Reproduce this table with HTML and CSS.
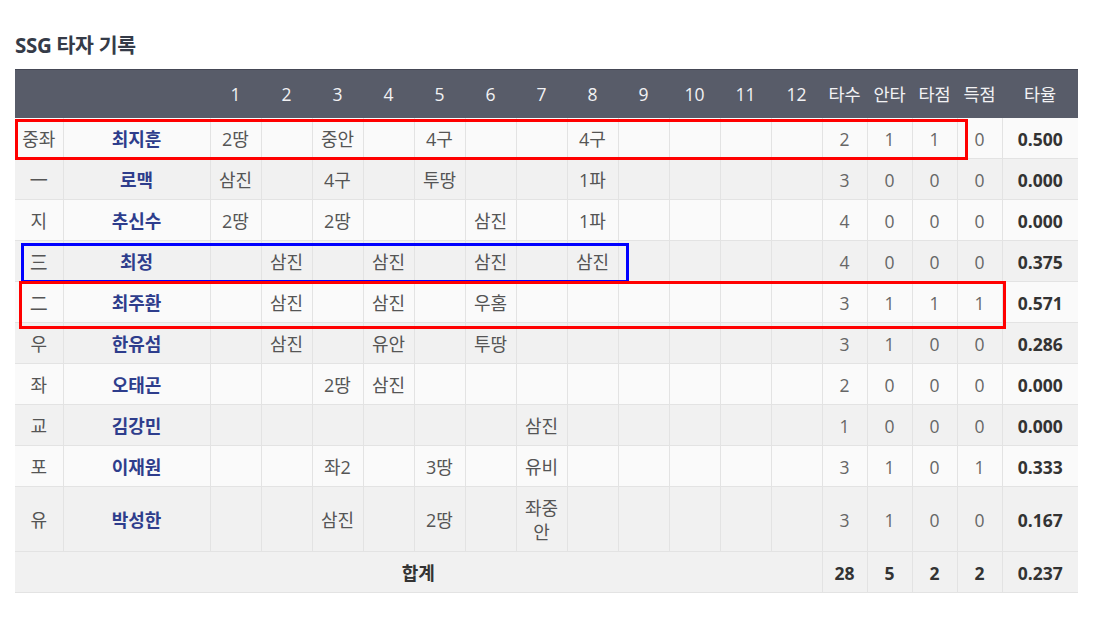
FILE: index.html
```html
<!DOCTYPE html>
<html lang="ko">
<head>
<meta charset="utf-8">
<link rel="stylesheet" href="styles.css">
</head>
<body>
<div class="page">
  <h2 class="title">SSG 타자 기록</h2>
  <div class="board">
    <table class="box">
      <colgroup>
        <col class="c-pos"><col class="c-name">
        <col class="c-inn"><col class="c-inn"><col class="c-inn"><col class="c-inn"><col class="c-inn"><col class="c-inn">
        <col class="c-inn"><col class="c-inn"><col class="c-inn"><col class="c-inn"><col class="c-inn"><col class="c-inn">
        <col class="c-stat"><col class="c-stat"><col class="c-stat"><col class="c-stat"><col class="c-avg">
      </colgroup>
      <thead>
        <tr>
          <th></th><th></th>
          <th>1</th><th>2</th><th>3</th><th>4</th><th>5</th><th>6</th><th>7</th><th>8</th><th>9</th><th>10</th><th>11</th><th>12</th>
          <th>타수</th><th>안타</th><th>타점</th><th>득점</th><th>타율</th>
        </tr>
      </thead>
      <tbody>
        <tr><td>중좌</td><td class="name">최지훈</td><td>2땅</td><td></td><td>중안</td><td></td><td>4구</td><td></td><td></td><td>4구</td><td></td><td></td><td></td><td></td><td class="num">2</td><td class="num">1</td><td class="num">1</td><td class="num">0</td><td class="avg">0.500</td></tr>
        <tr><td>一</td><td class="name">로맥</td><td>삼진</td><td></td><td>4구</td><td></td><td>투땅</td><td></td><td></td><td>1파</td><td></td><td></td><td></td><td></td><td class="num">3</td><td class="num">0</td><td class="num">0</td><td class="num">0</td><td class="avg">0.000</td></tr>
        <tr><td>지</td><td class="name">추신수</td><td>2땅</td><td></td><td>2땅</td><td></td><td></td><td>삼진</td><td></td><td>1파</td><td></td><td></td><td></td><td></td><td class="num">4</td><td class="num">0</td><td class="num">0</td><td class="num">0</td><td class="avg">0.000</td></tr>
        <tr><td>三</td><td class="name">최정</td><td></td><td>삼진</td><td></td><td>삼진</td><td></td><td>삼진</td><td></td><td>삼진</td><td></td><td></td><td></td><td></td><td class="num">4</td><td class="num">0</td><td class="num">0</td><td class="num">0</td><td class="avg">0.375</td></tr>
        <tr><td>二</td><td class="name">최주환</td><td></td><td>삼진</td><td></td><td>삼진</td><td></td><td>우홈</td><td></td><td></td><td></td><td></td><td></td><td></td><td class="num">3</td><td class="num">1</td><td class="num">1</td><td class="num">1</td><td class="avg">0.571</td></tr>
        <tr><td>우</td><td class="name">한유섬</td><td></td><td>삼진</td><td></td><td>유안</td><td></td><td>투땅</td><td></td><td></td><td></td><td></td><td></td><td></td><td class="num">3</td><td class="num">1</td><td class="num">0</td><td class="num">0</td><td class="avg">0.286</td></tr>
        <tr><td>좌</td><td class="name">오태곤</td><td></td><td></td><td>2땅</td><td>삼진</td><td></td><td></td><td></td><td></td><td></td><td></td><td></td><td></td><td class="num">2</td><td class="num">0</td><td class="num">0</td><td class="num">0</td><td class="avg">0.000</td></tr>
        <tr><td>교</td><td class="name">김강민</td><td></td><td></td><td></td><td></td><td></td><td></td><td>삼진</td><td></td><td></td><td></td><td></td><td></td><td class="num">1</td><td class="num">0</td><td class="num">0</td><td class="num">0</td><td class="avg">0.000</td></tr>
        <tr><td>포</td><td class="name">이재원</td><td></td><td></td><td>좌2</td><td></td><td>3땅</td><td></td><td>유비</td><td></td><td></td><td></td><td></td><td></td><td class="num">3</td><td class="num">1</td><td class="num">0</td><td class="num">1</td><td class="avg">0.333</td></tr>
        <tr><td>유</td><td class="name">박성한</td><td></td><td></td><td>삼진</td><td></td><td>2땅</td><td></td><td>좌중안</td><td></td><td></td><td></td><td></td><td></td><td class="num">3</td><td class="num">1</td><td class="num">0</td><td class="num">0</td><td class="avg">0.167</td></tr>
      </tbody>
      <tfoot>
        <tr><td colspan="14" class="sum">합계</td><td class="tot">28</td><td class="tot">5</td><td class="tot">2</td><td class="tot">2</td><td class="avg">0.237</td></tr>
      </tfoot>
    </table>
    <div class="mark mark-red mark-1"></div>
    <div class="mark mark-blue mark-2"></div>
    <div class="mark mark-red mark-3"></div>
  </div>
</div>
</body>
</html>
```

FILE: styles.css
```css
* { box-sizing: border-box; }
html, body { margin: 0; padding: 0; background: #fff; }
body {
  font-family: "Open Sans", "Noto Sans CJK KR", sans-serif;
  color: #555;
}
.page { padding: 32px 15px 0 15px; }
.title {
  margin: 0 0 10px 0;
  font-size: 20.5px;
  line-height: 27px;
  font-weight: 700;
  color: #353b48;
  letter-spacing: -0.3px;
}
.board { position: relative; width: 1063px; }
.box {
  border-collapse: collapse;
  table-layout: fixed;
  width: 1063px;
  font-size: 18px;
}
.c-pos { width: 48px; }
.c-name { width: 147px; }
.c-inn { width: 51px; }
.c-stat { width: 45px; }
.c-avg { width: 76px; }
.box th {
  background: #585c69;
  color: #f2f2f4;
  font-weight: 400;
  font-size: 17.5px;
  height: 48px;
  padding: 0 2px;
  text-align: center;
  border-top: 1px solid #454855;
}
.box td {
  text-align: center;
  padding: 9px 6px 7px 6px;
  line-height: 24px;
  height: 41px;
  border: 1px solid #e3e3e3;
  border-top: none;
  word-break: break-all;
}
.box tbody tr:nth-child(odd) td { background: #fafafa; }
.box tbody tr:nth-child(even) td { background: #f1f1f1; }
.box td:first-child { border-left: none; }
.box td:last-child { border-right: none; }
.box td.name { color: #2e3d8c; font-weight: 700; }
.box td.num { color: #666; padding: 9px 2px 7px 2px; font-size: 17.5px; }
.box td.avg { color: #333; font-weight: 700; padding: 9px 2px 7px 2px; font-size: 17.5px; }
.box tfoot td { background: #f1f1f1; }
.box td.sum { color: #333; font-weight: 700; border-left: none; }
.box td.tot { color: #333; font-weight: 700; padding: 9px 2px 7px 2px; font-size: 17.5px; }
.mark {
  position: absolute;
  border: 3px solid;
  pointer-events: none;
}
.mark-red { border-color: #ff0000; }
.mark-blue { border-color: #0000ff; }
.mark-1 { left: 0; top: 50px; width: 953px; height: 41px; }
.mark-2 { left: 6px; top: 174px; width: 608px; height: 40px; }
.mark-3 { left: 4px; top: 212px; width: 987px; height: 48px; }
```
